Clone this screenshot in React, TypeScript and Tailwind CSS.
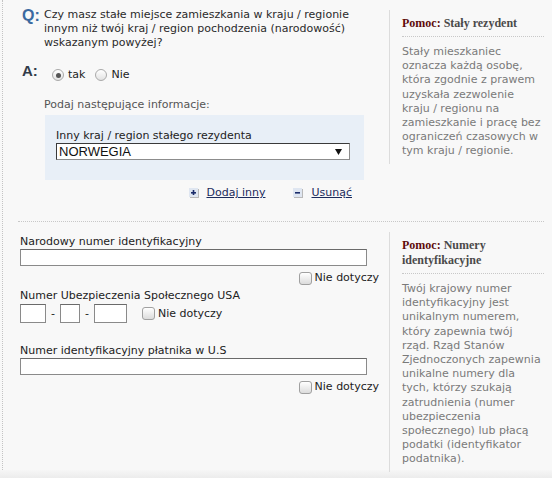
import React from "react";

function Radio({ checked }: { checked?: boolean }) {
  return (
    <span className="flex h-[12px] w-[12px] items-center justify-center rounded-full border border-[#a9a9a9] bg-gradient-to-b from-[#ffffff] to-[#e2e2e2]">
      {checked ? <span className="h-[5px] w-[5px] rounded-full bg-[#555555]" /> : null}
    </span>
  );
}

function Checkbox() {
  return (
    <span className="block h-[13px] w-[13px] rounded-[3px] border border-[#a0a0a0] bg-gradient-to-b from-[#ffffff] to-[#dcdcdc]" />
  );
}

function NotApplicable({ gap = "gap-[3px]" }: { gap?: string }) {
  return (
    <span className={`flex items-center ${gap}`}>
      <Checkbox />
      <span className="text-[#222]">Nie dotyczy</span>
    </span>
  );
}

function LinkIcon({ plus }: { plus?: boolean }) {
  return (
    <svg width="10" height="10" viewBox="0 0 10 10" className="block">
      <rect x="1" y="1" width="9" height="9" fill="#b9b9b9" />
      <rect x="0" y="0" width="9" height="9" fill="#dfe6f1" />
      <rect x="2" y="4" width="5" height="1.6" fill="#1c2d6b" />
      {plus ? <rect x="3.7" y="2" width="1.6" height="5" fill="#1c2d6b" /> : null}
    </svg>
  );
}

function HelpPanel({ title, lines }: { title: React.ReactNode; lines: string[] }) {
  return (
    <div className="mt-[10px] w-[163px] self-start border-l border-[#dcdcdc] pl-[12px] pr-[8px] pt-[6px] pb-[5px]">
      <div className="border-b border-dotted border-[#c8c8c8] pb-[5px] font-['Liberation_Serif',serif] text-[12px] font-bold leading-[15px] text-[#4a4a4a]">
        {title}
      </div>
      <div className="mt-[8px] text-[#7a7a7a] leading-[14.2px]">
        {lines.map((l, i) => (
          <div key={i} className="whitespace-nowrap">
            {l}
          </div>
        ))}
      </div>
    </div>
  );
}

export default function App() {
  return (
    <div className="h-[478px] w-[552px] overflow-hidden bg-[#f8f8f8] font-['DejaVu_Sans',sans-serif] text-[11px] leading-[14px] text-[#333]">
      <div className="ml-[2px] flex h-[470px] flex-col border-l border-dotted border-[#c4c4c4]">
        {/* Section 1 */}
        <div className="flex">
          <div className="w-[386px] pt-[8px] pb-[21px]">
            <div className="flex">
              <div className="ml-[19px] w-[22px] font-['Liberation_Sans',sans-serif] text-[16px] font-bold leading-[16px] text-[#3b6aa0]">
                Q:
              </div>
              <div className="w-[320px] text-[#2a2a2a]">
                Czy masz stałe miejsce zamieszkania w kraju / regionie innym niż twój kraj / region pochodzenia (narodowość) wskazanym powyżej?
              </div>
            </div>
            <div className="mt-[13px] flex">
              <div className="ml-[19px] w-[22px] font-['Liberation_Sans',sans-serif] text-[15px] font-bold leading-[16px] text-[#323c4a]">
                A:
              </div>
              <div className="ml-[8px] mt-[5px] flex h-[14px] items-center">
                <Radio checked />
                <span className="ml-[4px] text-[#222]">tak</span>
                <span className="ml-[10px]">
                  <Radio />
                </span>
                <span className="ml-[4px] text-[#222]">Nie</span>
              </div>
            </div>
            <div className="ml-[41px] mt-[16px] w-[320px]">
              <div className="text-[#555]">Podaj następujące informacje:</div>
              <div className="ml-[1px] mt-[3px] w-[319px] bg-[#e8eff7] pl-[11px] pt-[14px] pb-[20px]">
                <div className="text-[#222]">Inny kraj / region stałego rezydenta</div>
                <div className="flex h-[17px] w-[294px] items-center justify-between border border-[#8c8c8c] border-l-[#3a3a3a] border-t-[#3a3a3a] bg-white pl-[2px] pr-[7px] font-['Liberation_Sans',sans-serif] text-[13px] text-[#111]">
                  <span>NORWEGIA</span>
                  <svg width="7" height="6" viewBox="0 0 7 6" className="block">
                    <polygon points="0,0 7,0 3.5,6" fill="#111" />
                  </svg>
                </div>
              </div>
              <div className="mt-[6px] flex justify-end pr-[12px] text-[#1c2b5c]">
                <span className="flex items-center">
                  <LinkIcon plus />
                  <span className="ml-[7px] underline">Dodaj inny</span>
                </span>
                <span className="ml-[28px] flex items-center">
                  <LinkIcon />
                  <span className="ml-[8px] underline">Usunąć</span>
                </span>
              </div>
            </div>
          </div>
          <HelpPanel
            title={
              <>
                <span className="text-[#5e0b0b]">Pomoc:</span> Stały rezydent
              </>
            }
            lines={[
              "Stały mieszkaniec",
              "oznacza każdą osobę,",
              "która zgodnie z prawem",
              "uzyskała zezwolenie",
              "kraju / regionu na",
              "zamieszkanie i pracę bez",
              "ograniczeń czasowych w",
              "tym kraju / regionie.",
            ]}
          />
        </div>

        {/* separator */}
        <div className="ml-[15px] mr-[8px] border-b border-dotted border-[#c8c8c8]" />

        {/* Section 2 */}
        <div className="flex">
          <div className="w-[386px] pl-[17px] pt-[13px]">
            <div className="text-[#222]">Narodowy numer identyfikacyjny</div>
            <div className="h-[17px] w-[347px] border border-[#8a8a8a] border-t-[#6a6a6a] bg-white" />
            <div className="mt-[5px] flex w-[359px] justify-end">
              <NotApplicable />
            </div>

            <div className="mt-[4px] text-[#222]">Numer Ubezpieczenia Społecznego USA</div>
            <div className="mt-[1px] flex h-[19px] items-center">
              <div className="h-[19px] w-[26px] border border-[#8a8a8a] border-t-[#6a6a6a] bg-white" />
              <span className="mx-[5px] text-[#222]">-</span>
              <div className="h-[19px] w-[20px] border border-[#8a8a8a] border-t-[#6a6a6a] bg-white" />
              <span className="mx-[5px] text-[#222]">-</span>
              <div className="h-[19px] w-[33px] border border-[#8a8a8a] border-t-[#6a6a6a] bg-white" />
              <span className="ml-[15px]">
                <NotApplicable />
              </span>
            </div>

            <div className="mt-[21px] text-[#222]">Numer identyfikacyjny płatnika w U.S</div>
            <div className="h-[17px] w-[347px] border border-[#8a8a8a] border-t-[#6a6a6a] bg-white" />
            <div className="mt-[5px] flex w-[359px] justify-end">
              <NotApplicable />
            </div>
          </div>
          <HelpPanel
            title={
              <>
                <span className="text-[#5e0b0b]">Pomoc:</span> Numery
                <br />
                identyfikacyjne
              </>
            }
            lines={[
              "Twój krajowy numer",
              "identyfikacyjny jest",
              "unikalnym numerem,",
              "który zapewnia twój",
              "rząd. Rząd Stanów",
              "Zjednoczonych zapewnia",
              "unikalne numery dla",
              "tych, którzy szukają",
              "zatrudnienia (numer",
              "ubezpieczenia",
              "społecznego) lub płacą",
              "podatki (identyfikator",
              "podatnika).",
            ]}
          />
        </div>
      </div>
      <div className="h-[8px] bg-gradient-to-b from-[#f6f6f6] to-[#ececec]" />
    </div>
  );
}
